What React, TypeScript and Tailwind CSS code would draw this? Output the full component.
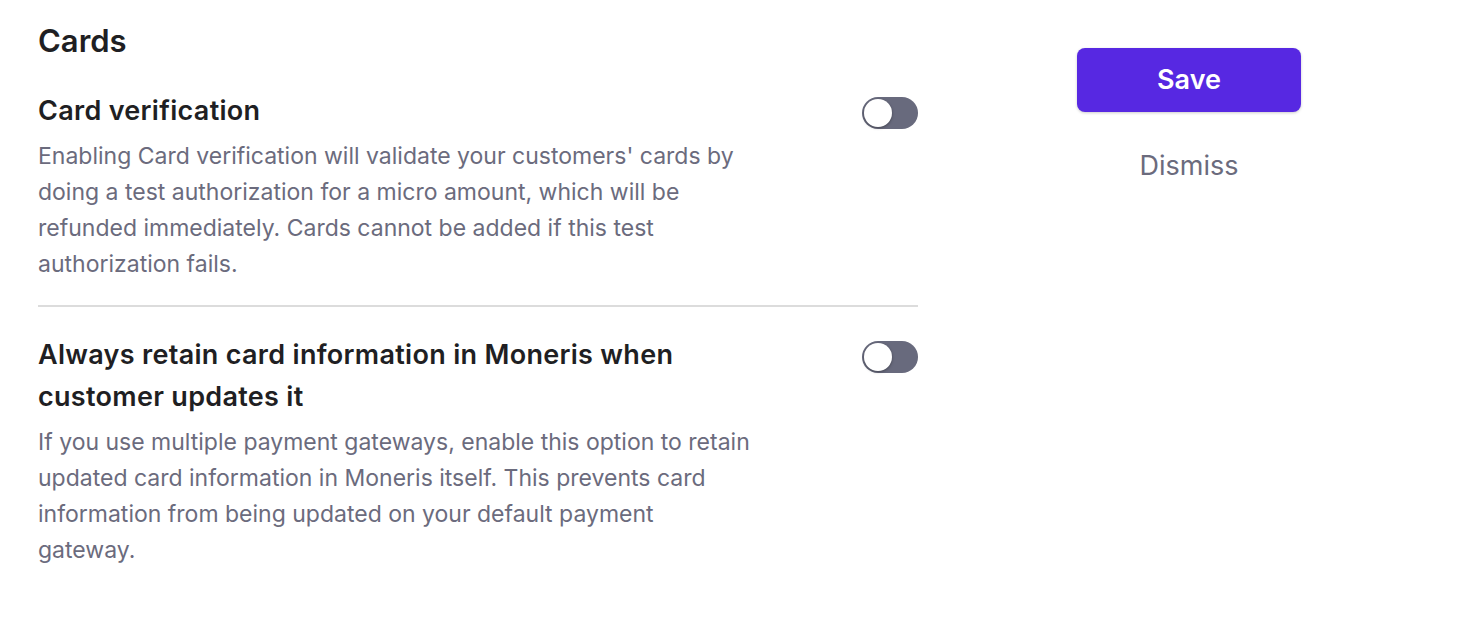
import { useState } from "react";

function Toggle({ on, onChange }: { on: boolean; onChange: (v: boolean) => void }) {
  return (
    <button
      type="button"
      role="switch"
      aria-checked={on}
      onClick={() => onChange(!on)}
      className={`relative flex h-[32px] w-[56px] shrink-0 items-center rounded-full px-[2px] ${
        on ? "bg-[#5728e2]" : "bg-[#686a7d]"
      }`}
    >
      <span
        className={`block h-[28px] w-[28px] rounded-full bg-white shadow-[0_1px_3px_rgba(0,0,0,0.35)] ${
          on ? "translate-x-[24px]" : "translate-x-0"
        }`}
      />
    </button>
  );
}

function SettingRow({
  title,
  description,
}: {
  title: string;
  description: string;
}) {
  const [on, setOn] = useState(false);
  return (
    <div className="flex items-start justify-between gap-8">
      <div className="max-w-[717px]">
        <h3 className="text-[27px] font-semibold leading-[42px] tracking-[0.3px] text-[#1f1f23]">{title}</h3>
        <p className="mt-[6px] text-[23px] leading-[36px] text-[#6b6b7d]">{description}</p>
      </div>
      <div className="pt-[7px]">
        <Toggle on={on} onChange={setOn} />
      </div>
    </div>
  );
}

export default function App() {
  return (
    <div
      className="flex min-h-screen bg-white"
      style={{ fontFamily: "Inter, 'Noto Sans', sans-serif" }}
    >
      <div className="ml-[38px] w-[880px] pt-[22px]">
        <h2 className="text-[31px] font-semibold leading-[38px] text-[#1f1f23]">Cards</h2>
        <div className="mt-[30px]">
          <SettingRow
            title="Card verification"
            description="Enabling Card verification will validate your customers' cards by doing a test authorization for a micro amount, which will be refunded immediately. Cards cannot be added if this test authorization fails."
          />
        </div>
        <div className="mt-[23px] mb-[27px] h-[2px] bg-[#dcdcdc]" />
        <SettingRow
          title="Always retain card information in Moneris when customer updates it"
          description="If you use multiple payment gateways, enable this option to retain updated card information in Moneris itself. This prevents card information from being updated on your default payment gateway."
        />
      </div>
      <div className="ml-[159px] flex w-[224px] flex-col items-center pt-[48px]">
        <button
          type="button"
          className="h-[64px] w-full rounded-[8px] bg-[#5728e2] text-[27px] font-semibold text-white shadow-[0_1px_3px_rgba(0,0,0,0.2)]"
        >
          Save
        </button>
        <button type="button" className="mt-[34px] text-[27px] leading-[40px] text-[#6b6b7d]">
          Dismiss
        </button>
      </div>
    </div>
  );
}
